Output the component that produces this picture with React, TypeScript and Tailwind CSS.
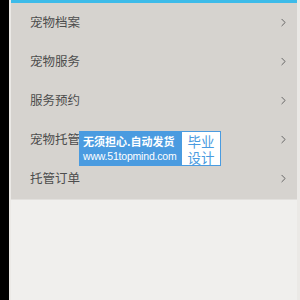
import { ChevronRight } from "lucide-react";

const items = ["宠物档案", "宠物服务", "服务预约", "宠物托管", "托管订单"];

export default function App() {
  return (
    <div
      className="flex h-[300px] w-[300px] overflow-hidden bg-black"
      style={{ fontFamily: '"Noto Sans CJK SC", "Liberation Sans", sans-serif' }}
    >
      <div className="w-[9px] shrink-0 bg-black" />
      <div className="w-[2px] shrink-0 bg-[#ebe9e6]" />
      <div className="relative flex flex-1 flex-col bg-[#f0efed]">
        <div className="h-[3px] bg-[#3dbbe9]" />
        <div className="flex flex-col bg-[#d6d3cf] pb-[1px]">
          {items.map((t) => (
            <div key={t} className="flex h-[39px] items-center justify-between pl-[19px] pr-[10px]">
              <span className="text-[12.5px] text-[#4d4d4d]">{t}</span>
              <ChevronRight size={13} strokeWidth={1.6} className="text-[#555]" />
            </div>
          ))}
        </div>
        <div className="h-[1px] bg-[#e2e0dd]" />
        <div className="flex-1" />

        {/* watermark badge over the menu */}
        <div className="absolute left-[68px] top-[131px] flex h-[35px] border border-[#4a9be0]">
          <div className="flex w-[102px] flex-col justify-center overflow-hidden whitespace-nowrap bg-[#4a9be0] pl-[3px] leading-none text-white">
            <span className="text-[11px] font-bold">无须担心.自动发货</span>
            <span
              className="mt-[4px] text-[10.5px] tracking-[-0.2px]"
              style={{ fontFamily: '"Liberation Sans", sans-serif' }}
            >
              www.51topmind.com
            </span>
          </div>
          <div className="flex w-[38px] flex-col items-center justify-center bg-white text-[13.5px] leading-[16px] text-[#4a9be0]">
            <span>毕业</span>
            <span>设计</span>
          </div>
        </div>
        <div className="absolute right-0 top-0 h-full w-[3px] bg-[#ebe9e6]" />
      </div>
    </div>
  );
}
